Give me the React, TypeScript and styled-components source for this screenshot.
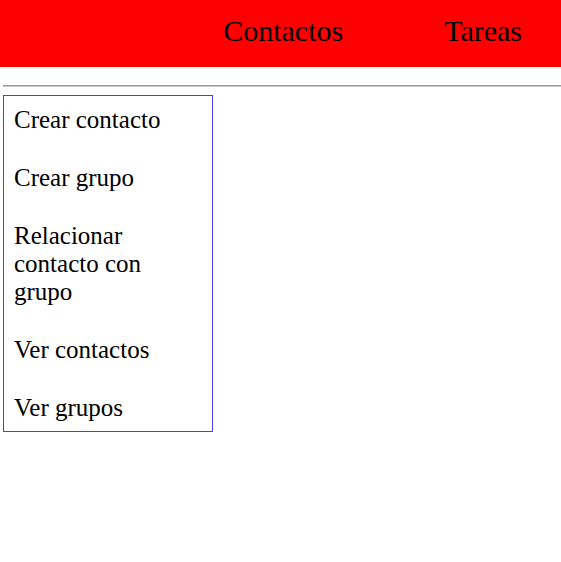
import React from "react";
import styled, { createGlobalStyle } from "styled-components";

const Global = createGlobalStyle`
  html, body { margin: 0; padding: 0; background: #fff; }
  body { font-family: "Liberation Serif", "Times New Roman", serif; color: #000; }
`;

const Header = styled.header`
  height: 67px;
  box-sizing: border-box;
  background: #ff0000;
  display: flex;
  justify-content: flex-end;
  align-items: flex-start;
  padding: 14px 39px 0 0;
  gap: 101px;
`;

const NavLink = styled.span`
  font-size: 30px;
  line-height: normal;
`;

const Main = styled.main`
  padding-left: 3px;
`;

const Rule = styled.hr`
  margin: 18px 0 8px 0;
  border: 0;
  border-top: 1px solid #9a9a9a;
  border-bottom: 1px solid #c4c4c4;
  height: 0;
`;

const Menu = styled.nav`
  width: 210px;
  box-sizing: border-box;
  border: 1px solid #4b3ff2;
  padding: 10px 10px 9px 10px;
  display: flex;
  flex-direction: column;
  gap: 30px;
`;

const MenuItem = styled.div`
  font-size: 25px;
  line-height: 28px;
`;

const items = [
  "Crear contacto",
  "Crear grupo",
  "Relacionar contacto con grupo",
  "Ver contactos",
  "Ver grupos",
];

export default function App() {
  return (
    <>
      <Global />
      <Header>
        <NavLink>Contactos</NavLink>
        <NavLink>Tareas</NavLink>
      </Header>
      <Main>
        <Rule />
        <Menu>
          {items.map((t) => (
            <MenuItem key={t}>{t}</MenuItem>
          ))}
        </Menu>
      </Main>
    </>
  );
}
